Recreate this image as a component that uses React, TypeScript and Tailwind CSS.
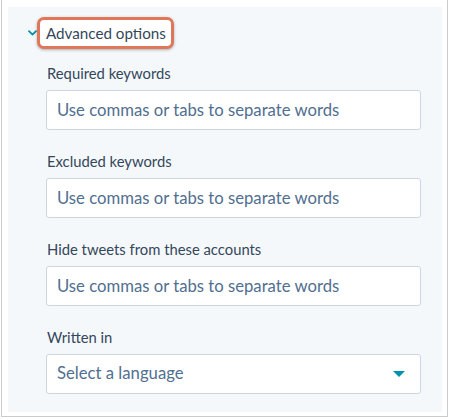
const fields = [
  { label: "Required keywords", placeholder: "Use commas or tabs to separate words" },
  { label: "Excluded keywords", placeholder: "Use commas or tabs to separate words" },
  { label: "Hide tweets from these accounts", placeholder: "Use commas or tabs to separate words" },
]

function Chevron() {
  return (
    <svg width="9" height="6" viewBox="0 0 9 6" className="shrink-0">
      <path d="M1 1.2 L4.5 4.6 L8 1.2" fill="none" stroke="#0091ae" strokeWidth="1.8" strokeLinecap="round" strokeLinejoin="round" />
    </svg>
  )
}

export default function App() {
  return (
    <div className="w-[450px] h-[420px] bg-white font-['Lato',sans-serif] text-[#33475b]">
      <div className="ml-[1px] w-[447px] h-[417px] border-l border-r border-b border-[#c9cbcd] pt-[7px] pl-[6px]">
        <div className="w-[434px] h-[405px] bg-[#f5f8fa] pt-[10px] pb-[18px]">
          <div className="flex items-center h-[32px] pl-[20px]">
            <Chevron />
            <div className="h-[32px] flex items-center border-[3px] border-[#e0775a] rounded-[7px] bg-white pl-[6px] pr-[5px] shadow-[0_1px_3px_rgba(0,0,0,0.3)]">
              <span className="text-[15.2px] leading-[26px]">Advanced options</span>
            </div>
          </div>

          <div className="mt-[14px] pl-[38px] flex flex-col gap-[21px]">
            {fields.map((f) => (
              <div key={f.label} className="flex flex-col">
                <label className="pl-[1px] text-[14.8px] leading-[20px] mb-[7px]">{f.label}</label>
                <input
                  placeholder={f.placeholder}
                  className="w-[375px] h-[40px] bg-white border border-[#cbd6e2] rounded-[3px] px-[10px] text-[16.7px] placeholder:text-[#516f90] outline-none"
                />
              </div>
            ))}
            <div className="flex flex-col">
              <label className="pl-[1px] text-[14.8px] leading-[20px] mb-[7px]">Written in</label>
              <div className="w-[375px] h-[40px] bg-white border border-[#cbd6e2] rounded-[3px] pl-[10px] pr-[15px] flex items-center justify-between">
                <span className="text-[16.7px] text-[#516f90]">Select a language</span>
                <svg width="12" height="6" viewBox="0 0 12 6">
                  <path d="M0 0 H12 L6 6 Z" fill="#0091ae" />
                </svg>
              </div>
            </div>
          </div>
        </div>
      </div>
    </div>
  )
}
